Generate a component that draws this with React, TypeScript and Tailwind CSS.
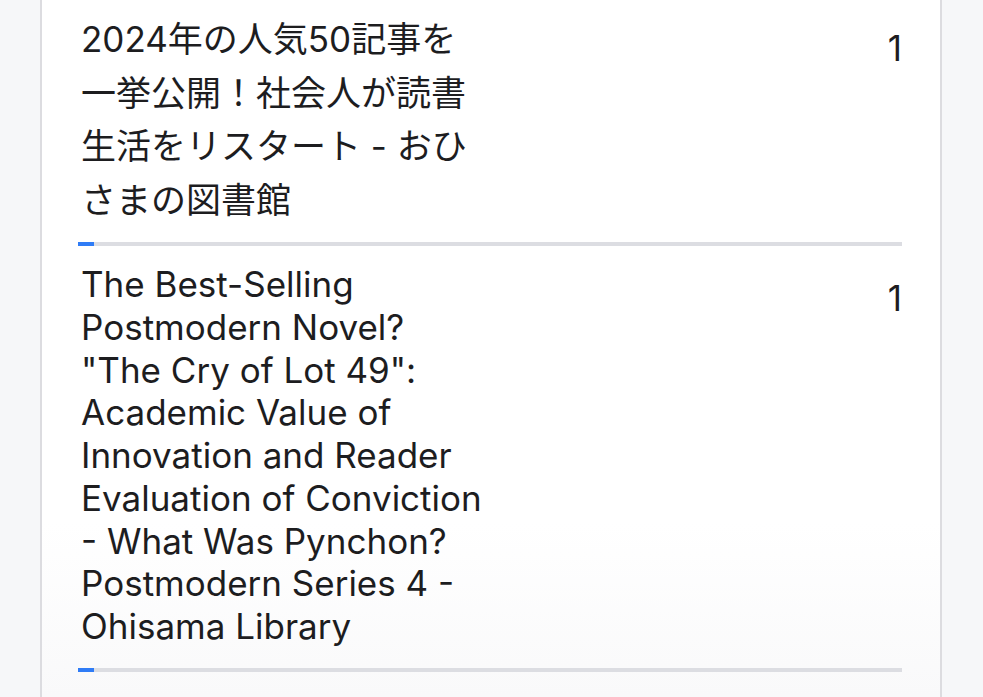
const font = "font-['Inter','Noto_Sans_CJK_JP',sans-serif]";

type Entry = {
  lines: string[];
  count: number;
  progress: number;
  leading: string;
  top: string;
  gap: string;
};

const entries: Entry[] = [
  {
    lines: ['2024年の人気50記事を', '一挙公開！社会人が読書', '生活をリスタート - おひ', 'さまの図書館'],
    count: 1,
    progress: 2,
    leading: 'leading-[53.6px]',
    top: 'pt-[13px]',
    gap: 'mt-[15px]',
  },
  {
    lines: [
      'The Best-Selling',
      'Postmodern Novel?',
      '"The Cry of Lot 49":',
      'Academic Value of',
      'Innovation and Reader',
      'Evaluation of Conviction',
      '- What Was Pynchon?',
      'Postmodern Series 4 -',
      'Ohisama Library',
    ],
    count: 1,
    progress: 2,
    leading: 'leading-[42.7px]',
    top: 'pt-[17px]',
    gap: 'mt-[20px]',
  },
];

function RankRow({ entry }: { entry: Entry }) {
  return (
    <li className={entry.top}>
      <div className="flex items-start justify-between">
        <p className={`w-[420px] pl-[3px] text-[35px] text-[#1d1d1f] ${entry.leading}`}>
          {entry.lines.map((line, i) => (
            <span key={i} className="block">
              {line}
            </span>
          ))}
        </p>
        <span className="mt-[14px] text-[35px] leading-[42.7px] text-[#1d1d1f]">{entry.count}</span>
      </div>
      <div className={`h-[4px] w-full bg-[#dcdde2] ${entry.gap}`}>
        <div className="h-full bg-[#2f7cf6]" style={{ width: `${entry.progress}%` }} />
      </div>
    </li>
  );
}

export default function App() {
  return (
    <div className={`h-[697px] overflow-hidden bg-[#f6f7f9] ${font}`}>
      <div className="ml-[40px] h-full w-[902px] border-x-2 border-[#dcdce0] bg-gradient-to-b from-white from-75% to-[#f9f9fa] pl-[36px] pr-[38px]">
        <ul>
          {entries.map((entry, i) => (
            <RankRow key={i} entry={entry} />
          ))}
        </ul>
      </div>
    </div>
  );
}
